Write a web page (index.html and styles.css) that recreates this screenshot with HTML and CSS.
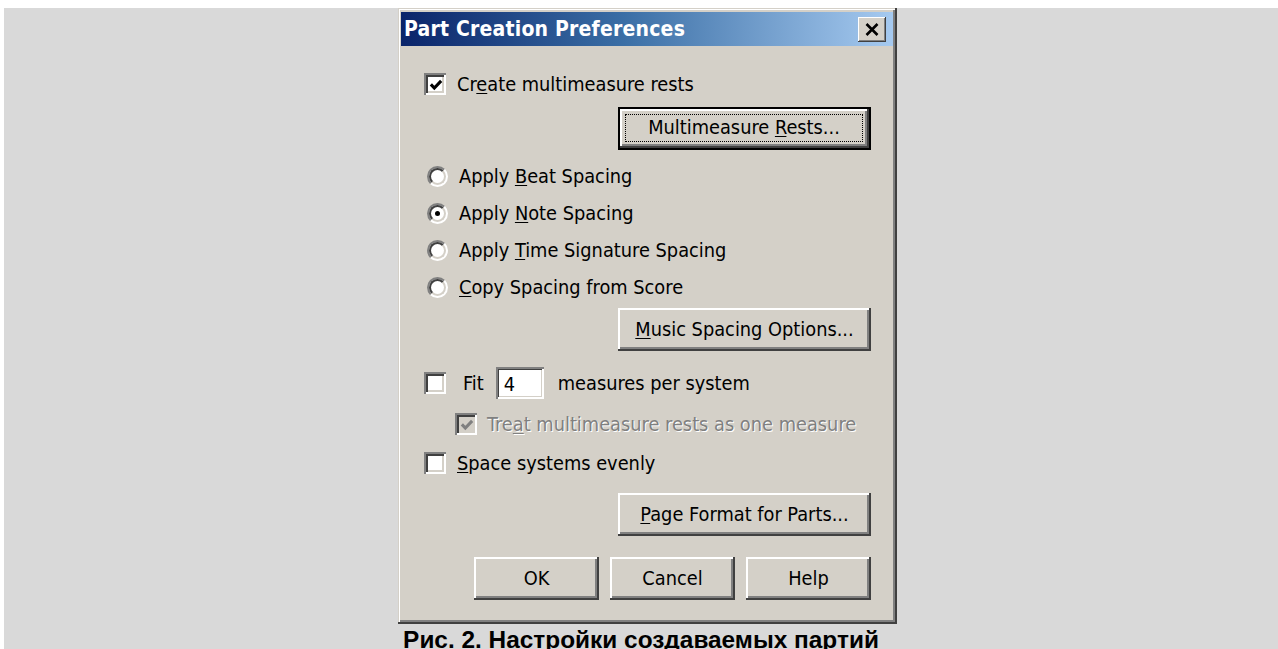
FILE: index.html
```html
<!DOCTYPE html>
<html lang="ru">
<head>
<meta charset="utf-8">
<title>Part Creation Preferences</title>
<link rel="stylesheet" href="styles.css">
</head>
<body>
<div class="stage">
  <div class="dialog">
    <div class="titlebar">
      <span class="title">Part Creation Preferences</span>
      <span class="close">
        <svg width="14" height="13" viewBox="0 0 14 13"><path d="M1.5 1 L12.5 12 M12.5 1 L1.5 12" stroke="#000" stroke-width="2.6" fill="none"/></svg>
      </span>
    </div>
    <div class="body">
      <div class="row row-create">
        <span class="check checked"><svg viewBox="0 0 14 14"><path d="M3 6.5 L5.7 9.3 L11 3.8" stroke="#000" stroke-width="2.4" fill="none"/></svg></span>
        <span class="label">Cr<u>e</u>ate multimeasure rests</span>
      </div>
      <div class="btn-line first-btn">
        <span class="btn default"><span class="focus"><span>Multimeasure <u>R</u>ests...</span></span></span>
      </div>
      <div class="radios">
        <div class="row radio-row"><span class="radio"></span><span class="label">Apply <u>B</u>eat Spacing</span></div>
        <div class="row radio-row"><span class="radio on"></span><span class="label">Apply <u>N</u>ote Spacing</span></div>
        <div class="row radio-row"><span class="radio"></span><span class="label">Apply <u>T</u>ime Signature Spacing</span></div>
        <div class="row radio-row"><span class="radio"></span><span class="label"><u>C</u>opy Spacing from Score</span></div>
      </div>
      <div class="btn-line music-btn">
        <span class="btn"><span><u>M</u>usic Spacing Options...</span></span>
      </div>
      <div class="row row-fit">
        <span class="check"></span>
        <span class="label fit">Fit</span>
        <span class="field">4</span>
        <span class="label">measures per system</span>
      </div>
      <div class="row row-treat">
        <span class="check checked disabled"><svg viewBox="0 0 14 14"><path d="M3 6.5 L5.7 9.3 L11 3.8" stroke="#808080" stroke-width="2.4" fill="none"/></svg></span>
        <span class="label gray">Tre<u>a</u>t multimeasure rests as one measure</span>
      </div>
      <div class="row row-space">
        <span class="check"></span>
        <span class="label"><u>S</u>pace systems evenly</span>
      </div>
      <div class="btn-line page-btn">
        <span class="btn"><span><u>P</u>age Format for Parts...</span></span>
      </div>
      <div class="btn-line actions">
        <span class="btn small">OK</span>
        <span class="btn small">Cancel</span>
        <span class="btn small">Help</span>
      </div>
    </div>
  </div>
  <div class="caption">Рис. 2. Настройки создаваемых партий</div>
</div>
</body>
</html>
```
FILE: styles.css
```css
html, body {
  margin: 0;
  padding: 0;
  background: #ffffff;
}

.stage {
  margin: 8px 0 0 4px;
  height: 641px;
  background: #d9d9d9;
  overflow: hidden;
  display: flex;
  flex-direction: column;
}

/* Window frame */
.dialog {
  margin-left: 394px;
  width: 499px;
  height: 616px;
  flex: none;
  box-sizing: border-box;
  background: #d4d0c8;
  padding: 3px 4px 0 3px;
  box-shadow:
    inset -2px -2px #404040,
    inset 1px 1px #d4d0c8,
    inset 2px 2px #ffffff,
    inset -4px -4px #808080;
  font-family: "DejaVu Sans Condensed", "DejaVu Sans", sans-serif;
  font-stretch: condensed;
  font-size: 19.8px;
  color: #000;
  display: flex;
  flex-direction: column;
}

.titlebar {
  height: 34px;
  margin-top: 1px;
  background: linear-gradient(to right, #0a246a 0%, #3a6ea5 45%, #a6caf0 100%);
  display: flex;
  align-items: center;
  justify-content: space-between;
  padding: 0 7px 0 3px;
}

.title {
  color: #ffffff;
  font-weight: bold;
  font-size: 21px;
  letter-spacing: 0.2px;
}

.close {
  width: 28px;
  height: 25px;
  box-sizing: border-box;
  background: #d4d0c8;
  display: flex;
  align-items: center;
  justify-content: center;
  box-shadow:
    inset -1px -1px #404040,
    inset 1px 1px #ffffff,
    inset -2px -2px #808080;
  margin-top: 1px;
}

.body {
  display: flex;
  flex-direction: column;
  padding: 0 22px 0 23px;
}

.row {
  display: flex;
  align-items: center;
}

.label u,
.btn u {
  text-decoration-thickness: 1px;
  text-underline-offset: 2px;
}

/* Sunken check box */
.check {
  width: 22px;
  height: 22px;
  flex: none;
  box-sizing: border-box;
  background: #ffffff;
  box-shadow:
    inset 2px 2px #808080,
    inset -2px -2px #ffffff,
    inset 4px 4px #404040,
    inset -4px -4px #d4d0c8;
  display: flex;
  align-items: center;
  justify-content: center;
  margin-right: 11px;
}

.check svg {
  width: 18px;
  height: 18px;
  margin: 2px 0 0 1px;
}

.check.disabled {
  background: #d4d0c8;
}

.radio {
  width: 21px;
  height: 21px;
  flex: none;
  box-sizing: border-box;
  border-radius: 50%;
  border: 2px solid;
  border-color: #808080 #ffffff #ffffff #808080;
  background: #ffffff;
  margin: 0 11px 0 0;
  position: relative;
}

.radio::before {
  content: "";
  position: absolute;
  inset: 0;
  border-radius: 50%;
  border: 2px solid;
  border-color: #404040 #d4d0c8 #d4d0c8 #404040;
}

.radio.on::after {
  content: "";
  position: absolute;
  left: 6px;
  top: 6px;
  width: 5px;
  height: 5px;
  border-radius: 50%;
  background: #000;
}

.row-create {
  height: 30px;
  margin-top: 23px;
}

.btn-line {
  display: flex;
  justify-content: flex-end;
}

.btn {
  height: 43px;
  width: 253px;
  box-sizing: border-box;
  display: flex;
  align-items: center;
  justify-content: center;
  background: #d4d0c8;
  box-shadow:
    inset -2px -2px #404040,
    inset 2px 2px #ffffff,
    inset -4px -4px #808080;
}

.btn.default {
  box-shadow:
    inset 0 0 0 2px #000000,
    inset -4px -4px #404040,
    inset 4px 4px #ffffff,
    inset -6px -6px #808080;
}

.focus {
  flex: 1;
  align-self: stretch;
  margin: 7px 8px 8px 7px;
  border: 1px dotted #000;
  display: flex;
  align-items: center;
  justify-content: center;
  padding-bottom: 2px;
}

.first-btn {
  margin-top: 8px;
}

.radios {
  margin-top: 8px;
  display: flex;
  flex-direction: column;
}

.radio-row {
  height: 37px;
  padding-left: 3px;
}

.music-btn {
  margin-top: 2px;
}

.row-fit {
  height: 34px;
  margin-top: 15px;
}

.fit {
  margin-left: 6px;
  margin-right: 12px;
}

.field {
  width: 48px;
  height: 32px;
  box-sizing: border-box;
  background: #ffffff;
  box-shadow:
    inset 2px 2px #808080,
    inset -2px -2px #ffffff,
    inset 3px 3px #404040,
    inset -3px -3px #d4d0c8;
  padding: 3px 0 0 8px;
  margin-right: 14px;
  display: flex;
  align-items: center;
}

.row-treat {
  height: 28px;
  margin-top: 10px;
  padding-left: 31px;
}

.row-treat .check {
  margin-right: 10px;
}

.gray {
  color: #808080;
  text-shadow: 1px 1px #ffffff;
}

.row-space {
  height: 28px;
  margin-top: 11px;
}

.page-btn {
  margin-top: 16px;
}

.actions {
  margin-top: 21px;
  gap: 11px;
}

.btn.small {
  width: 125px;
}

.caption {
  margin-top: 2px;
  text-align: center;
  font-family: "Liberation Sans", Arial, sans-serif;
  font-weight: bold;
  font-size: 24.4px;
  line-height: 28px;
  color: #000;
  white-space: nowrap;
}
```
